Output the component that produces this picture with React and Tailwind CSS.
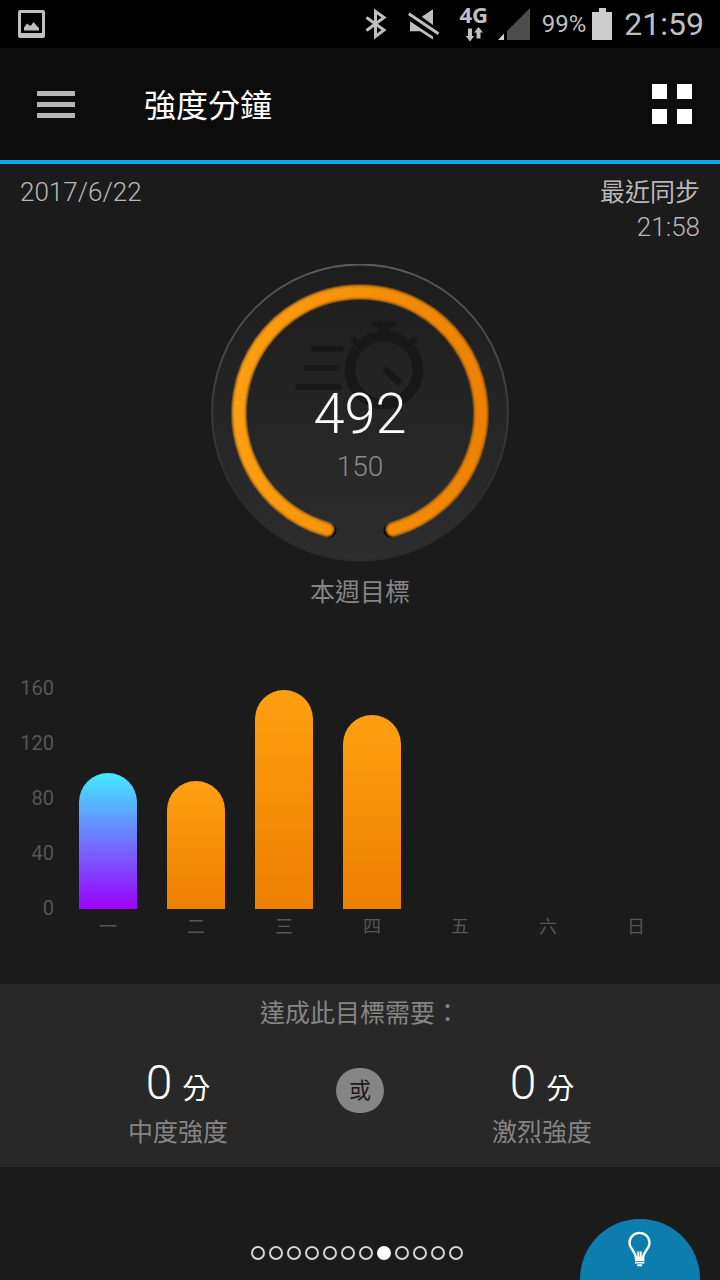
import clsx from 'clsx';

const days = [
  { label: '一', minutes: 99, first: true },
  { label: '二', minutes: 93 },
  { label: '三', minutes: 159 },
  { label: '四', minutes: 141 },
  { label: '五', minutes: 0 },
  { label: '六', minutes: 0 },
  { label: '日', minutes: 0 },
];

const ticks = [160, 120, 80, 40, 0];
const PX_PER_MINUTE = 220 / 160;
const PAGE_COUNT = 12;
const CURRENT_PAGE = 7;

const StatusBar = () => (
  <div className="flex h-12 items-center bg-black pl-[18px] pr-4 text-[#bfbfbf]">
    <svg className="h-7 w-[27px]" viewBox="0 0 27 28" fill="currentColor">
      <path fillRule="evenodd" d="M2 0h23a2 2 0 0 1 2 2v24a2 2 0 0 1-2 2H2a2 2 0 0 1-2-2V2a2 2 0 0 1 2-2zM3 3v20h21V3z" />
      <path d="M6 20.500v-3l3-4 2.500 2 1.500 0 2.500-3.500 3 3.500 2.500 2.500v2.500z" />
    </svg>
    <div className="ml-auto flex items-center">
      <svg className="h-8 w-[22px]" viewBox="0 0 22 32" fill="none" stroke="currentColor" strokeWidth="3">
        <path d="M1.500 9.500 19 22 10.500 28.500V3.500L19 9.500 1.500 22.500" />
      </svg>
      <svg className="ml-[21px] h-8 w-8" viewBox="0 0 32 32" fill="currentColor">
        <path d="M25 1.300V17L13.700 8.700z" />
        <path d="M2 13.300 25 28.500v3L12 23.300H2z" />
        <path d="M.8 5.800 30.500 25.800" stroke="currentColor" strokeWidth="3" fill="none" />
      </svg>
      <div className="ml-5 flex w-[28px] flex-col items-center gap-1">
        <span className="font-['Noto_Sans'] text-[22px] font-bold leading-4">4G</span>
        <svg className="h-4 w-[18px]" viewBox="0 0 18 16" fill="currentColor">
          <path d="M3 2.500h4v7.500h2.200L5 15.500.8 10H3z" />
          <path d="M11.500 12.500h4V6.500H18L13.500 1 9 6.500h2.500z" />
        </svg>
      </div>
      <svg className="ml-[10px] h-8 w-8" viewBox="0 0 32 32">
        <path d="M0 32l6-6.500V32z" fill="#cfcfcf" />
        <path d="M9 32V23L32 0v32z" fill="#4d4d4d" />
      </svg>
      <span className="ml-3 text-2xl leading-8">99%</span>
      <svg className="ml-[6px] h-8 w-5" viewBox="0 0 20 32" fill="#cdcdcd">
        <path d="M7 0h7v4h6v28H0V4h7z" />
      </svg>
      <span className="ml-3 text-[32px] leading-8">21:59</span>
    </div>
  </div>
);

const Header = () => (
  <header className="flex h-[116px] items-center border-b-4 border-[#12a5ef] bg-[#0c0c0c] pl-9 pr-7">
    <button type="button" aria-label="選單" className="flex w-10 flex-col gap-[6px] px-px">
      <span className="h-[5px] bg-[#b5b5b5]" />
      <span className="h-[5px] bg-[#b5b5b5]" />
      <span className="h-[5px] bg-[#b5b5b5]" />
    </button>
    <h1 className="ml-[68px] pt-1 text-[32px] leading-10 text-white">強度分鐘</h1>
    <button type="button" aria-label="總覽" className="ml-auto grid grid-cols-2 gap-[10px]">
      <span className="size-[15px] bg-white" />
      <span className="size-[15px] bg-white" />
      <span className="size-[15px] bg-white" />
      <span className="size-[15px] bg-white" />
    </button>
  </header>
);

const Gauge = ({ value, goal }) => (
  <div className="relative mx-auto mt-[19px] size-[300px]">
    <svg className="size-full" viewBox="0 1 300 300" fill="none">
      <defs>
        <linearGradient id="disc" x1="0" y1="0" x2="0" y2="1">
          <stop offset="0" stopColor="#1d1d1d" />
          <stop offset="1" stopColor="#2d2d2d" />
        </linearGradient>
        <linearGradient id="rim" x1="0" y1="0" x2="0" y2="1">
          <stop offset="0" stopColor="#5a5a5a" />
          <stop offset="0.5" stopColor="#3a3a3a" />
          <stop offset="0.8" stopColor="#2b2b2b" />
        </linearGradient>
        <linearGradient id="ring" x1="29" y1="0" x2="271" y2="0" gradientUnits="userSpaceOnUse">
          <stop offset="0" stopColor="#ff9e10" />
          <stop offset="1" stopColor="#ee8200" />
        </linearGradient>
      </defs>
      <circle cx="150" cy="149.500" r="148" fill="url(#disc)" stroke="url(#rim)" strokeWidth="2" />

      {/* stopwatch */}
      <g stroke="#181818">
        <circle cx="174" cy="107" r="34" strokeWidth="10.500" />
        <path d="M162.300 61h23.700" strokeWidth="5.500" />
        <path d="M174 62v12" strokeWidth="11.700" />
        <path d="M141.700 75.700l10 8M206.300 75.700l-10 8" strokeWidth="6.500" />
        <path d="M174 105.500l16.500 15" strokeWidth="6.500" />
        <path d="M104 85.700h27M96 105h30M88 124h41" strokeWidth="6" strokeLinecap="round" />
      </g>

      {/* progress ring */}
      <g strokeLinecap="round">
        <path d="M119.500 267.500l-3-1M180.500 267.500l3-1" stroke="#050505" strokeWidth="14" />
        <g stroke="url(#ring)">
          <path d="M117 266.400A121 121 0 1 1 183 266.400" strokeWidth="16" opacity="0.350" />
          <path d="M117 266.400A121 121 0 1 1 183 266.400" strokeWidth="14" opacity="0.500" />
          <path d="M117 266.400A121 121 0 1 1 183 266.400" strokeWidth="12" opacity="0.700" />
          <path d="M117 266.400A121 121 0 1 1 183 266.400" strokeWidth="9" />
        </g>
      </g>
    </svg>
    <div className="absolute inset-0 flex flex-col items-center pt-[118px] font-light">
      <span className="text-[56px] leading-[64px] text-white">{value}</span>
      <span className="text-[28px] leading-[42px] text-[#8a8a8a]">{goal}</span>
    </div>
  </div>
);

const WeekChart = () => (
  <section className="mt-[68px] flex pr-10">
    <div className="flex h-[240px] w-16 flex-col justify-between pr-[10px] text-right text-xl leading-5 text-[#565656]">
      {ticks.map((tick) => (
        <span key={tick}>{tick}</span>
      ))}
    </div>
    <div className="grid flex-1 grid-cols-7">
      {days.map((day) => (
        <div key={day.label} className="flex flex-col items-center">
          <div className="flex h-[231px] items-end">
            <div
              className={clsx(
                'w-[58px] rounded-t-full bg-linear-to-b/srgb',
                day.first ? 'from-[#43eaff] to-[#9c00ff]' : 'from-[#ffa010] to-[#ec7f00]'
              )}
              style={{ height: Math.round(day.minutes * PX_PER_MINUTE) }}
            />
          </div>
          <span className="text-lg leading-[35px] text-[#565656]">{day.label}</span>
        </div>
      ))}
    </div>
  </section>
);

const Remaining = ({ minutes, label }) => (
  <div className="flex flex-col items-center">
    <p className="flex items-baseline gap-[10px] text-white">
      <span className="text-5xl font-light leading-[56px]">{minutes}</span>
      <span className="text-[28px] leading-10">分</span>
    </p>
    <p className="mt-1 text-[25px] leading-[35px] text-[#858585]">{label}</p>
  </div>
);

const App = () => (
  <div className="flex min-h-screen flex-col bg-[#1b1b1b] font-['Roboto','Noto_Sans_CJK_TC',sans-serif]">
    <StatusBar />
    <Header />

    <main>
      <div className="flex justify-between px-5 pt-[11px] leading-[35px] text-[#b8b8b8]">
        <p className="text-[26px] font-light">2017/6/22</p>
        <div className="text-right">
          <p className="text-[25px]">最近同步</p>
          <p className="text-[26px] font-light">21:58</p>
        </div>
      </div>

      <Gauge value={492} goal={150} />
      <p className="mt-[11px] text-center text-[25px] leading-[35px] text-[#858585]">本週目標</p>

      <WeekChart />

      <section className="mt-10 bg-[#282828] px-5 pb-[17px] pt-3">
        <h2 className="text-center text-[25px] leading-[35px] text-[#858585]">達成此目標需要：</h2>
        <div className="mt-6 grid grid-cols-[1fr_48px_1fr] items-start">
          <Remaining minutes={0} label="中度強度" />
          <span className="mt-[13px] flex h-[45px] items-center justify-center rounded-full bg-[#858585] text-[22px] text-[#1b1b1b]">
            或
          </span>
          <Remaining minutes={0} label="激烈強度" />
        </div>
      </section>
    </main>

    <footer className="relative flex flex-1 items-end justify-center gap-1 pb-5 pr-[6px]">
      {Array.from({ length: PAGE_COUNT }, (_, i) => (
        <span
          key={i}
          className={clsx(
            'size-[14px] rounded-full border-2',
            i === CURRENT_PAGE ? 'border-white bg-white' : 'border-[#d4d4d4]'
          )}
        />
      ))}
      <button
        type="button"
        aria-label="提示"
        className="absolute bottom-0 right-5 flex h-[61px] w-[120px] justify-center rounded-t-full bg-[#0d7dae] pt-3"
      >
        <svg className="h-9 w-6" viewBox="0 0 24 37" fill="none" stroke="#fff" strokeWidth="2.400">
          <path d="M7.800 27.500C7.500 20.500 1.200 18.500 1.200 12.200a10.300 10.300 0 0 1 20.600 0C21.800 18.500 15.500 20.500 15.200 27.500z" />
          <path d="M10.200 27v-6M12.800 27v-6" strokeWidth="2" />
          <path d="M6.800 29.800h9.800M6.800 32.500h9.800M9.200 35.300h5" strokeWidth="2" />
        </svg>
      </button>
    </footer>
  </div>
);

export default App;
